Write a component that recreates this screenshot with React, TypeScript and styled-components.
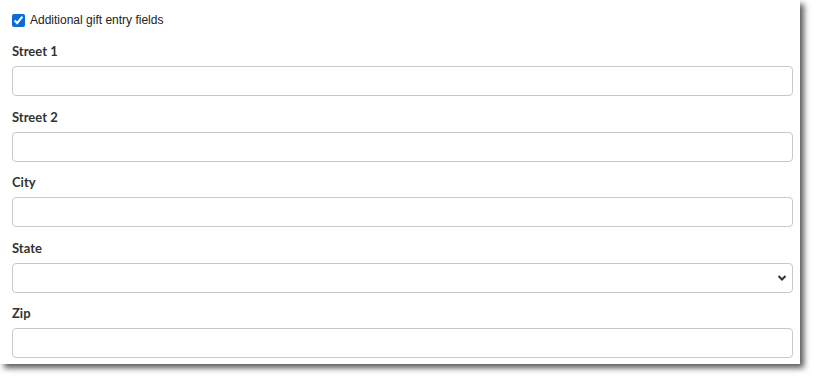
import React from 'react';
import styled, { createGlobalStyle } from 'styled-components';

const GlobalStyle = createGlobalStyle`
  html, body {
    margin: 0;
    padding: 0;
    background: #ffffff;
  }
`;

const Page = styled.main`
  min-height: 100vh;
  background: #ffffff;
`;

const Panel = styled.section`
  box-sizing: border-box;
  width: 800px;
  height: 364px;
  padding: 12px 7px 0 12px;
  background: #ffffff;
  box-shadow: 4px 4px 6px rgba(0, 0, 0, 0.65);
  display: flex;
  flex-direction: column;
`;

const CheckRow = styled.label`
  display: flex;
  align-items: center;
  gap: 5px;
  height: 16px;
  font-family: "Liberation Sans", Arial, sans-serif;
  font-size: 12px;
  color: #222;
`;

const Check = styled.input`
  width: 13px;
  height: 13px;
  margin: 0;
  accent-color: #0b6bdc;
`;

const Fields = styled.div`
  display: flex;
  flex-direction: column;
  gap: 13.5px;
  margin-top: 16px;
`;

const Field = styled.div`
  display: flex;
  flex-direction: column;
  gap: 8px;
`;

const Label = styled.label`
  font-family: Lato, "Liberation Sans", sans-serif;
  font-weight: 700;
  font-size: 13px;
  line-height: 14px;
  color: #333;
`;

const TextInput = styled.input`
  box-sizing: border-box;
  width: 781px;
  height: 30px;
  margin: 0;
  border: 1px solid #c8c8c8;
  border-radius: 4px;
  background: #fff;
`;

const SelectWrap = styled.div`
  position: relative;
  width: 781px;
  height: 30px;
`;

const Select = styled.select`
  box-sizing: border-box;
  width: 100%;
  height: 100%;
  margin: 0;
  border: 1px solid #c8c8c8;
  border-radius: 4px;
  background: #fff;
  appearance: none;
`;

const Chevron = styled.svg`
  position: absolute;
  right: 6px;
  top: 11px;
  pointer-events: none;
`;

const fields = ['Street 1', 'Street 2', 'City', 'State', 'Zip'];

export default function App() {
  return (
    <Page>
      <GlobalStyle />
      <Panel>
        <CheckRow>
          <Check type="checkbox" defaultChecked />
          Additional gift entry fields
        </CheckRow>
        <Fields>
          {fields.map((name) => (
            <Field key={name}>
              <Label>{name}</Label>
              {name === 'State' ? (
                <SelectWrap>
                  <Select defaultValue="">
                    <option value=""></option>
                  </Select>
                  <Chevron width="10" height="8" viewBox="0 0 10 8">
                    <path d="M1.5 2 L5 5.5 L8.5 2" fill="none" stroke="#333" strokeWidth="2" />
                  </Chevron>
                </SelectWrap>
              ) : (
                <TextInput type="text" />
              )}
            </Field>
          ))}
        </Fields>
      </Panel>
    </Page>
  );
}
